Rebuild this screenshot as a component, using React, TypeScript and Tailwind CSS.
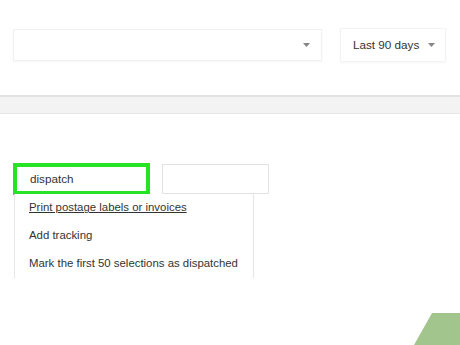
import React from 'react';

function Caret() {
  return (
    <svg width="7" height="4" viewBox="0 0 7 4" className="shrink-0">
      <path d="M0 0 L7 0 L3.5 4 Z" fill="#858585" />
    </svg>
  );
}

const menuItems = [
  { label: 'Print postage labels or invoices', underline: true },
  { label: 'Add tracking', underline: false },
  { label: 'Mark the first 50 selections as dispatched', underline: false },
];

export default function App() {
  return (
    <div
      className="relative w-[460px] h-[345px] overflow-hidden bg-white text-[#333]"
      style={{ fontFamily: '"Liberation Sans", Arial, sans-serif' }}
    >
      {/* Filters */}
      <div className="flex items-center gap-[18px] pl-[13px] pt-[28px]">
        <div className="flex h-[32px] w-[309px] items-center justify-end border border-[#f0f0f0] pr-[11px] shadow-[0_1px_2px_rgba(0,0,0,0.04)]">
          <Caret />
        </div>
        <div className="flex h-[34px] w-[106px] items-center gap-[9px] border border-[#f3f3f3] pl-[12px] text-[11.7px] shadow-[0_1px_2px_rgba(0,0,0,0.04)]">
          <span>Last 90 days</span>
          <Caret />
        </div>
      </div>

      {/* Toolbar band */}
      <div className="mt-[33px] h-[19px] border-t-2 border-b border-t-[#e2e2e2] border-b-[#e8e8e8] bg-[#f3f3f3]" />

      {/* Search row */}
      <div className="mt-[49px] flex items-start gap-[12px] pl-[13px]">
        <div className="relative">
          <div className="flex h-[32px] w-[137px] items-center border-4 border-[#26e326] pl-[13px] text-[11.7px]">
            dispatch
          </div>
          <ul className="absolute left-[1px] top-[31px] w-[240px] border-x border-[#e6e6e6] bg-white text-[11.4px]">
            {menuItems.map((item) => (
              <li
                key={item.label}
                className={`flex h-[28px] items-center pl-[14px] ${item.underline ? 'underline' : ''}`}
              >
                {item.label}
              </li>
            ))}
          </ul>
        </div>
        <div className="mt-[1px] h-[30px] w-[107px] border border-[#e2e2e2]" />
      </div>

      {/* Corner badge */}
      <svg className="absolute bottom-0 right-0" width="46" height="33" viewBox="0 0 46 33">
        <polygon points="0,33 18,1 46,1 46,33" fill="#a2c58d" />
      </svg>
    </div>
  );
}
